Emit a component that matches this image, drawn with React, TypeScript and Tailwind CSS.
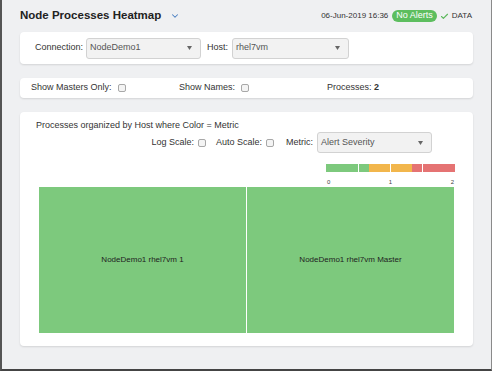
import React from "react";
import { ChevronDown, Check } from "lucide-react";

// small dropdown look-alike
const Select: React.FC<{ value: string; width: string }> = ({ value, width }) => (
  <div
    className={`${width} h-[21px] flex items-center justify-between bg-[#f2f2f2] border border-[#d2d2d2] rounded-[3px] pl-[3px] pr-[8px] text-[9px] text-[#555]`}
  >
    <span>{value}</span>
    <svg width="5" height="4" viewBox="0 0 5 4">
      <polygon points="0,0 5,0 2.5,4" fill="#666" />
    </svg>
  </div>
);

const Checkbox: React.FC = () => (
  <span className="inline-block w-[8px] h-[8px] border border-[#a8a8a8] rounded-[2px] bg-[#f4f4f4]" />
);

const Panel: React.FC<{ className?: string; children: React.ReactNode }> = ({ className = "", children }) => (
  <div className={`bg-white rounded-[4px] shadow-[0_1px_2px_rgba(0,0,0,0.12)] ${className}`}>{children}</div>
);

const App: React.FC = () => {
  return (
    <div
      className="w-[492px] h-[371px] bg-[#eff0f2] border-l-2 border-l-[#555] border-b-2 border-b-[#444] border-r border-r-[#8a8a8a] pl-[18px] pr-[18px] flex flex-col text-[#333]"
      style={{ fontFamily: '"Liberation Sans", Arial, sans-serif' }}
    >
      {/* Header */}
      <div className="h-[32px] flex items-center justify-between">
        <div className="flex items-center">
          <span className="text-[11.5px] font-bold text-[#222]">Node Processes Heatmap</span>
          <ChevronDown className="ml-[9px] w-[10px] h-[10px] text-[#4a7fc1]" strokeWidth={2.5} />
        </div>
        <div className="flex items-center text-[8px] text-[#333]">
          <span>06-Jun-2019 16:36</span>
          <span className="ml-[4px] h-[12px] px-[4px] rounded-full bg-[#5dbe5f] text-white text-[9px] flex items-center">
            No Alerts
          </span>
          <Check className="ml-[3px] w-[9px] h-[9px] text-[#5cb85c]" strokeWidth={3} />
          <span className="ml-[3px] mr-[1px]">DATA</span>
        </div>
      </div>

      {/* Connection / Host */}
      <Panel className="h-[32px] flex items-center pl-[15px] text-[9px]">
        <span>Connection:</span>
        <div className="ml-[3px]">
          <Select value="NodeDemo1" width="w-[115px]" />
        </div>
        <span className="ml-[6px]">Host:</span>
        <div className="ml-[4px]">
          <Select value="rhel7vm" width="w-[117px]" />
        </div>
      </Panel>

      {/* Options */}
      <Panel className="mt-[14px] h-[20px] flex items-center pl-[11px] text-[9px]">
        <div className="w-[148px] flex items-center">
          <span>Show Masters Only:</span>
          <span className="ml-[6px] flex">
            <Checkbox />
          </span>
        </div>
        <div className="w-[148px] flex items-center">
          <span>Show Names:</span>
          <span className="ml-[6px] flex">
            <Checkbox />
          </span>
        </div>
        <div>
          Processes: <span className="font-bold">2</span>
        </div>
      </Panel>

      {/* Heatmap */}
      <Panel className="mt-[14px] h-[234px] flex flex-col text-[9px]">
        <div className="pl-[16px] pt-[7px] h-[19px] leading-[12px]">
          Processes organized by Host where Color = Metric
        </div>
        <div className="mt-[2px] h-[19px] flex items-center justify-end pr-[41px]">
          <span>Log Scale:</span>
          <span className="ml-[4px] flex">
            <Checkbox />
          </span>
          <span className="ml-[10px]">Auto Scale:</span>
          <span className="ml-[4px] flex">
            <Checkbox />
          </span>
          <span className="ml-[12px]">Metric:</span>
          <div className="ml-[4px]">
            <Select value="Alert Severity" width="w-[115px]" />
          </div>
        </div>
        <div className="mt-[12px] flex flex-col items-end pr-[18px]">
          <div className="w-[129px]">
            <svg width="129" height="8" viewBox="0 0 129 8" className="block">
              <rect x="0" y="0" width="43" height="8" fill="#7dc97d" />
              <rect x="43" y="0" width="43" height="8" fill="#f2b64c" />
              <rect x="86" y="0" width="43" height="8" fill="#e57373" />
              <rect x="32" y="0" width="1" height="8" fill="#fff" />
              <rect x="64" y="0" width="1" height="8" fill="#fff" />
              <rect x="96" y="0" width="1" height="8" fill="#fff" />
            </svg>
            <div className="mt-[7px] flex justify-between px-[1px] text-[6px] leading-[7px] text-[#444]">
              <span>0</span>
              <span>1</span>
              <span>2</span>
            </div>
          </div>
        </div>
        <div className="mt-[1px] mx-[19px] h-[146px] flex gap-[1px] bg-white text-[8px] text-[#222]">
          <div className="flex-1 bg-[#7dc97d] flex items-center justify-center">NodeDemo1 rhel7vm 1</div>
          <div className="flex-1 bg-[#7dc97d] flex items-center justify-center">NodeDemo1 rhel7vm Master</div>
        </div>
      </Panel>
    </div>
  );
};

export default App;
